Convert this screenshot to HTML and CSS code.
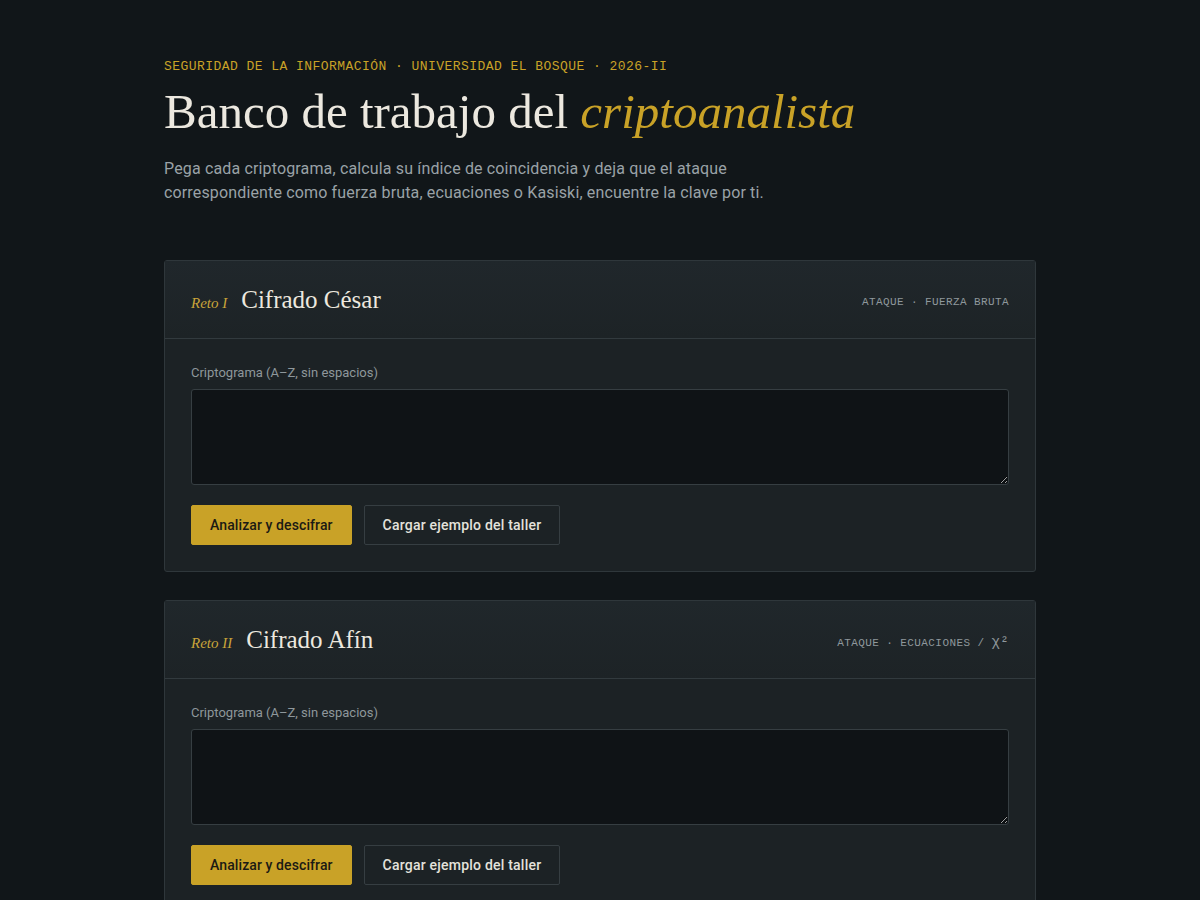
FILE: index.html
```html
<!DOCTYPE html>
<html lang="es">
<head>
<meta charset="utf-8">
<title>Banco de trabajo del criptoanalista</title>
<link rel="stylesheet" href="styles.css">
</head>
<body>
<main class="page">
  <header class="hero">
    <p class="eyebrow">Seguridad de la información · Universidad El Bosque · 2026-II</p>
    <h1 class="title">Banco de trabajo del <em>criptoanalista</em></h1>
    <p class="lead">Pega cada criptograma, calcula su índice de coincidencia y deja que el ataque correspondiente como fuerza bruta, ecuaciones o Kasiski, encuentre la clave por ti.</p>
  </header>

  <section class="card">
    <div class="card-head">
      <div class="card-name"><span class="reto">Reto I</span><h2>Cifrado César</h2></div>
      <span class="attack">Ataque · Fuerza bruta</span>
    </div>
    <div class="card-body">
      <label class="field-label" for="c1">Criptograma (A–Z, sin espacios)</label>
      <textarea id="c1" class="cipher"></textarea>
      <div class="actions">
        <button class="btn btn-primary">Analizar y descifrar</button>
        <button class="btn btn-ghost">Cargar ejemplo del taller</button>
      </div>
    </div>
  </section>

  <section class="card">
    <div class="card-head">
      <div class="card-name"><span class="reto">Reto II</span><h2>Cifrado Afín</h2></div>
      <span class="attack">Ataque · Ecuaciones / <span class="chi">χ²</span></span>
    </div>
    <div class="card-body">
      <label class="field-label" for="c2">Criptograma (A–Z, sin espacios)</label>
      <textarea id="c2" class="cipher"></textarea>
      <div class="actions">
        <button class="btn btn-primary">Analizar y descifrar</button>
        <button class="btn btn-ghost">Cargar ejemplo del taller</button>
      </div>
    </div>
  </section>
</main>
</body>
</html>
```

FILE: styles.css
```css
* { box-sizing: border-box; }
html, body { margin: 0; padding: 0; }
body {
  background: #111619;
  color: #e8e4da;
  font-family: Roboto, "Noto Sans", sans-serif;
}
.page {
  width: 872px;
  margin: 0 auto;
  padding: 58px 0 40px;
}
.eyebrow {
  margin: 0;
  font-family: "Liberation Mono", "DejaVu Sans Mono", monospace;
  font-size: 13px;
  letter-spacing: 0.45px;
  text-transform: uppercase;
  color: #c9a227;
  line-height: 18px;
}
.title {
  margin: 6px 0 0;
  font-family: "Liberation Serif", "DejaVu Serif", serif;
  font-weight: 400;
  font-size: 49px;
  line-height: 60px;
  color: #ece8df;
}
.title em {
  font-style: italic;
  color: #c9a227;
}
.lead {
  margin: 15px 0 0;
  max-width: 620px;
  font-size: 16px;
  line-height: 24px;
  letter-spacing: 0.15px;
  color: #9aa2a7;
}
.hero { margin-bottom: 55px; }
.card {
  background: #1c2225;
  border: 1px solid #2f373b;
  border-radius: 3px;
  margin-bottom: 28px;
}
.card-head {
  height: 78px;
  padding: 0 26px;
  display: flex;
  align-items: center;
  justify-content: space-between;
  border-bottom: 1px solid #323a3e;
  background: linear-gradient(180deg, #20272b 0%, #1d2326 100%);
}
.card-name { display: flex; align-items: baseline; gap: 14px; }
.reto {
  font-family: "Liberation Serif", "DejaVu Serif", serif;
  font-style: italic;
  font-size: 15px;
  color: #c9a43a;
}
.card-name h2 {
  margin: 0;
  font-family: "Liberation Serif", "DejaVu Serif", serif;
  font-weight: 400;
  font-size: 25px;
  color: #ece8df;
}
.attack {
  margin-top: 5px;
  font-family: "Liberation Mono", "DejaVu Sans Mono", monospace;
  font-size: 11px;
  letter-spacing: 0.4px;
  text-transform: uppercase;
  color: #8f989c;
}
.chi { font-size: 14px; text-transform: none; }
.card-body { padding: 25px 26px 26px; }
.field-label {
  display: block;
  font-size: 13px;
  line-height: 18px;
  color: #8e979b;
  margin-bottom: 7px;
}
.cipher {
  display: block;
  width: 100%;
  height: 96px;
  resize: vertical;
  background: #0f1316;
  border: 1px solid #363e42;
  border-radius: 3px;
  color: #e8e4da;
  font-family: "Liberation Mono", monospace;
  font-size: 14px;
  padding: 10px 12px;
}
.actions {
  display: flex;
  gap: 12px;
  margin-top: 20px;
}
.btn {
  height: 40px;
  padding: 0 18px;
  font-family: Roboto, "Noto Sans", sans-serif;
  font-size: 14px;
  font-weight: 500;
  letter-spacing: 0.1px;
  border-radius: 2px;
  cursor: pointer;
}
.btn-primary {
  background: #c9a227;
  border: 1px solid #c9a227;
  color: #1b1a14;
}
.btn-ghost {
  background: transparent;
  border: 1px solid #363e42;
  color: #e4e2dc;
  letter-spacing: 0.22px;
}
```
